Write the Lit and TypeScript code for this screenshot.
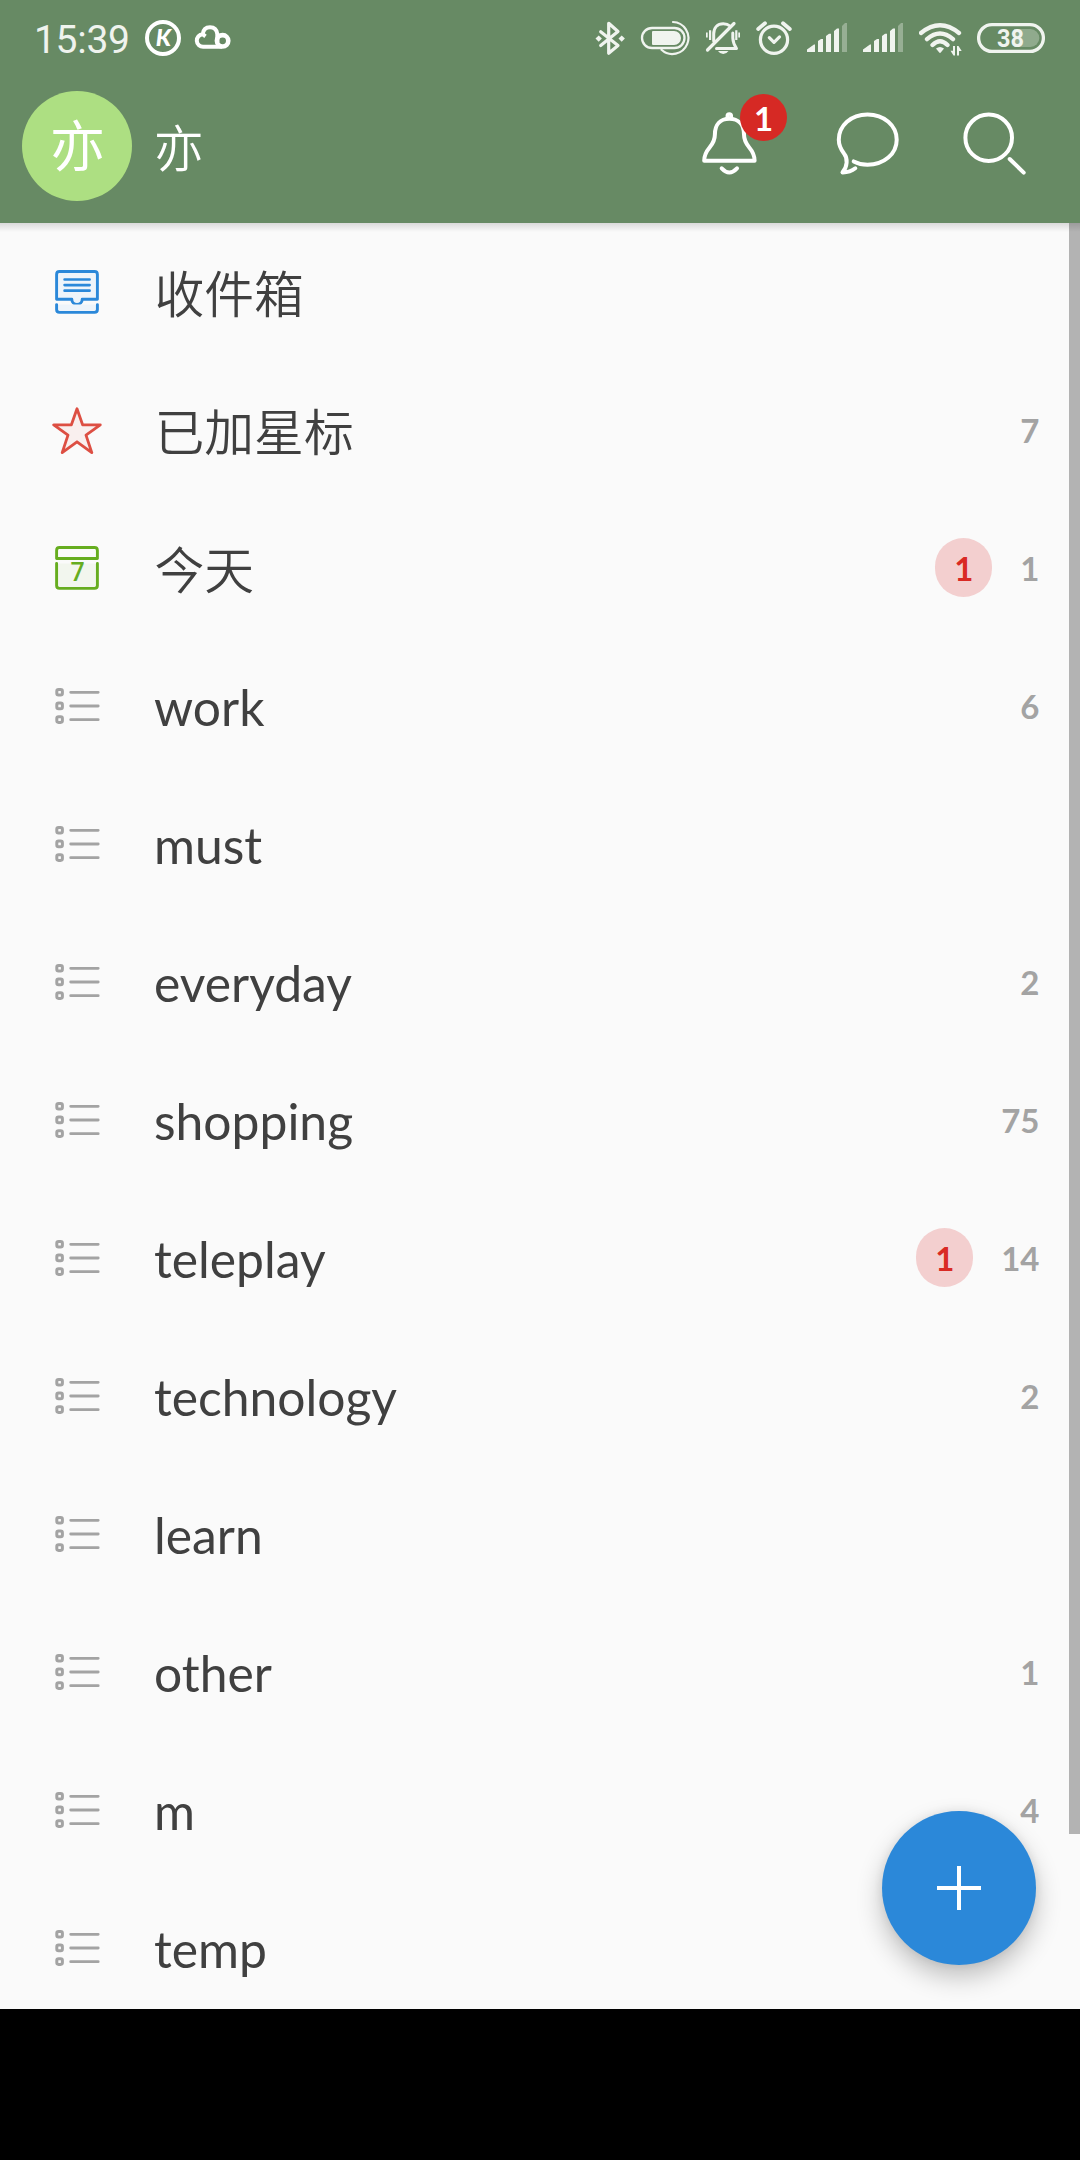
import { LitElement, html, svg, css, nothing } from "lit";
import { customElement, property } from "lit/decorators.js";

type IconKind = "inbox" | "star" | "today" | "list";

interface Entry {
  icon: IconKind;
  title: string;
  count?: number;
  overdue?: number;
}

const ENTRIES: Entry[] = [
  { icon: "inbox", title: "收件箱" },
  { icon: "star", title: "已加星标", count: 7 },
  { icon: "today", title: "今天", count: 1, overdue: 1 },
  { icon: "list", title: "work", count: 6 },
  { icon: "list", title: "must" },
  { icon: "list", title: "everyday", count: 2 },
  { icon: "list", title: "shopping", count: 75 },
  { icon: "list", title: "teleplay", count: 14, overdue: 1 },
  { icon: "list", title: "technology", count: 2 },
  { icon: "list", title: "learn" },
  { icon: "list", title: "other", count: 1 },
  { icon: "list", title: "m", count: 4 },
  { icon: "list", title: "temp" },
];

/* Row icons are drawn around the origin of a 50x50 box. */
const ROW_ICONS = {
  inbox: svg`
    <g fill="#eef4fa" stroke="#2b88d9" stroke-width="2.9" stroke-linecap="round" stroke-linejoin="round">
      <path d="M-20.4 -17.6 Q-20.4 -20.5 -17.5 -20.5 H17.5 Q20.4 -20.5 20.4 -17.6 V7.2 H5.2 A5.2 5.2 0 0 1 -5.2 7.2 H-20.4 Z"/>
      <path d="M-20.4 12.6 V17.5 Q-20.4 20.4 -17.5 20.4 H17.5 Q20.4 20.4 20.4 17.5 V12.6"/>
      <path stroke-width="2.7" d="M-12.4 -12.5 H12.6 M-12.4 -6.9 H12.6 M-12.4 -1.3 H12.6"/>
    </g>`,
  star: svg`
    <path d="M0 -21.3 L5.6 -5.2 H23.3 L9 5.1 L14.8 22.6 L0 11.8 L-14.8 22.6 L-9 5.1 L-23.3 -5.2 H-5.6 Z"
      fill="#f9efee" stroke="#dd4f43" stroke-width="2.8" stroke-linejoin="round"/>`,
  today: svg`
    <g stroke="#66ad1f" stroke-width="2.9" stroke-linecap="round" stroke-linejoin="round">
      <path fill="#fafafa" d="M-20.4 -9.5 V-17.6 Q-20.4 -20.5 -17.5 -20.5 H17.5 Q20.4 -20.5 20.4 -17.6 V-9.5 Z"/>
      <path fill="#f2f6ee" d="M-20.4 -4.6 V17.5 Q-20.4 20.4 -17.5 20.4 H17.5 Q20.4 20.4 20.4 17.5 V-4.6"/>
    </g>
    <text x="0.5" y="13" class="day">7</text>`,
  list: svg`
    <g fill="none" stroke="#a3a3a3" stroke-width="3" stroke-linecap="round">
      <rect x="-20.2" y="-16.6" width="5.6" height="5.6" rx="1.8"/>
      <rect x="-20.2" y="-2.9" width="5.6" height="5.6" rx="1.8"/>
      <rect x="-20.2" y="10.8" width="5.6" height="5.6" rx="1.8"/>
      <path stroke-width="2.8" d="M-6.3 -13.7 H21.2 M-6.3 0 H21.2 M-6.3 13.7 H21.2"/>
    </g>`,
};

@customElement("list-row")
class ListRow extends LitElement {
  @property({ attribute: false }) entry!: Entry;

  static styles = css`
    :host {
      display: flex;
      flex: none;
      align-items: center;
      height: 138px;
      box-sizing: border-box;
      padding: 0 40.5px 0 52px;
      font-family: Lato, "Noto Sans CJK SC", sans-serif;
    }
    .icon { width: 50px; height: 50px; flex: none; }
    .day {
      font: 500 25px Roboto, sans-serif;
      fill: #66ad1f;
      text-anchor: middle;
    }
    .title {
      flex: 1;
      padding: 1px 0 0 52px;
      font-size: 49.8px;
      line-height: 62px;
      color: #404040;
      white-space: nowrap;
    }
    .title.cjk {
      padding: 0 0 2px 52.5px;
      font-family: "Noto Sans CJK SC", sans-serif;
      font-weight: 350;
    }
    .overdue, .count { font-size: 33px; font-weight: 700; line-height: 40px; }
    .overdue {
      display: flex;
      align-items: center;
      justify-content: center;
      box-sizing: border-box;
      width: 57px;
      height: 59px;
      margin: 0 28px 1px 0;
      border-radius: 28.5px;
      background: #f3cfcf;
      color: #d92a24;
    }
    .count { color: #a3a3a3; }
  `;

  render() {
    const { icon, title, count, overdue } = this.entry;
    return html`
      <svg class="icon" viewBox="-25 -25 50 50">${ROW_ICONS[icon]}</svg>
      <span class="title ${icon === "list" ? "" : "cjk"}">${title}</span>
      ${overdue ? html`<span class="overdue">${overdue}</span>` : nothing}
      ${count ? html`<span class="count">${count}</span>` : nothing}
    `;
  }
}

const signalBars = (x: number) => svg`
  <g transform="translate(${x} 0)">
    <path d="M0 52 V49.5 L7 44.5 H8 V52 Z M11 52 V41 L14 39 H16 V52 Z M19 52 V36 L22 33.8 H24 V52 Z M27 52 V31 L30 28.5 H32 V52 Z"/>
    <path opacity="0.35" d="M35 52 V26 L38 23 H40 V52 Z"/>
  </g>`;

@customElement("status-bar")
class StatusBar extends LitElement {
  static styles = css`
    :host {
      display: flex;
      align-items: flex-start;
      height: 76px;
      box-sizing: border-box;
      padding: 0 35px 0 34px;
      color: #f0f4ef;
    }
    svg { height: 76px; flex: none; display: block; }
    .time {
      width: 108px;
      font: 400 39px/80px Roboto, sans-serif;
      letter-spacing: -0.3px;
      color: #eff3ee;
    }
    .left { display: flex; gap: 12px; flex: 1; }
    .right { display: flex; gap: 14px; fill: #f0f4ef; }
    .line { fill: none; stroke: #f0f4ef; stroke-linecap: round; stroke-linejoin: round; }
    .k { font: italic 900 23.5px Lato, sans-serif; fill: #fff; text-anchor: middle; }
    .level { font: 700 26.5px Roboto, sans-serif; fill: #f0f4ef; }
  `;

  render() {
    return html`
      <span class="time">15:39</span>
      <div class="left">
        <svg width="40" viewBox="142 0 40 76">
          <circle cx="163" cy="38" r="16" fill="none" stroke="#fff" stroke-width="4"/>
          <text class="k" x="163.5" y="46.2">K</text>
        </svg>
        <svg width="38" viewBox="194 0 38 76">
          <path d="M222 46.8 H203.5 A6.3 6.3 0 0 1 202.7 34.2 Q203.5 27.2 210 27.2 Q216.5 27.2 217.3 34 V42 M202.7 34.2 L205.5 36.3" fill="none" stroke="#fff" stroke-width="4" stroke-linejoin="round"/>
          <circle cx="222.6" cy="40.8" r="5.7" fill="none" stroke="#fff" stroke-width="4.6"/>
        </svg>
      </div>
      <div class="right">
        <svg width="32" viewBox="594 0 32 76">
          <path class="line" stroke-width="3.2" d="M600.7 31.7 L618 45.5 L608.7 53.3 V23.3 L618 31.5 L600.7 45.5"/>
          <path d="M595.5 38.6 l3.2 -3.2 l3.2 3.2 l-3.2 3.2 Z M618.5 38.6 l3.2 -3.2 l3.2 3.2 l-3.2 3.2 Z"/>
        </svg>
        <svg width="51" viewBox="640 0 51 76">
          <rect class="line" stroke-width="2.3" x="642" y="28" width="42.5" height="20" rx="10"/>
          <path d="M653 31 H674 A7 7 0 0 1 674 45 H653 Q652 45 652 44 V32 Q652 31 653 31 Z"/>
          <path class="line" stroke-width="2.2" d="M673 22 A16 16 0 1 1 661.5 49.7"/>
        </svg>
        <svg width="36" viewBox="705 0 36 76">
          <path class="line" stroke-width="3.2" d="M707.5 50 L734 23.5"/>
          <path class="line" stroke-width="3" d="M713.7 41 V34 C713.7 27.5 717.5 23.7 723.3 23.7 Q727.5 23.7 730 26 M732.8 33 V38 Q733 43 736.5 48.6 H716.5"/>
          <path d="M718 51 H728.5 Q726.5 54 723.2 54 Q720 54 718 51 Z"/>
          <path d="M706 32.6 h1.7 v5 h-1.7 Z M709 30.3 h2.2 v9.8 h-2.2 Z M735.2 30.3 h2.2 v9.8 h-2.2 Z M738.3 32.6 h1.7 v5 h-1.7 Z"/>
        </svg>
        <svg width="37" viewBox="755 0 37 76">
          <circle class="line" stroke-width="3.2" cx="774" cy="39.7" r="13.6"/>
          <path class="line" stroke-width="3.2" d="M769.3 37.6 L774 42.3 L779.5 36.9"/>
          <path class="line" stroke-width="3.8" d="M758.2 29 L765 23.3 M783 23.3 L789.8 29"/>
        </svg>
        <svg width="43" viewBox="806 0 43 76">${signalBars(807)}</svg>
        <svg width="42" viewBox="863 0 42 76">${signalBars(863)}</svg>
        <svg width="44" viewBox="919 0 44 76">
          <path class="line" stroke-width="4.3" d="M921 33 Q940 17.5 959 33 M927 39.2 Q940 28 953 39.2 M932.5 45 Q940 37.5 947.5 45"/>
          <path d="M936 48.5 Q940 45.5 944 48.5 L940.8 52.5 Q940 53.3 939.2 52.5 Z"/>
          <path d="M953 46 h2 v9.5 h-1.5 L950.5 50.7 h2.5 Z M957 55.5 v-9.5 h1.5 L961.7 51 h-2.7 v4.5 Z"/>
        </svg>
        <svg width="68" viewBox="977 0 68 76">
          <path opacity="0.3" d="M1014 29 H1030.3 A9 9 0 0 1 1030.3 47 H1014 Z"/>
          <rect class="line" stroke-width="3.3" x="978.6" y="24.6" width="64.8" height="26.8" rx="13.4"/>
          <text class="level" x="997" y="47" textLength="27" lengthAdjust="spacingAndGlyphs">38</text>
        </svg>
      </div>
    `;
  }
}

@customElement("app-header")
class AppHeader extends LitElement {
  static styles = css`
    :host {
      display: flex;
      align-items: flex-start;
      height: 147px;
      box-sizing: border-box;
      padding: 15px 48px 0 22px;
      color: #fff;
      font-family: Lato, "Noto Sans CJK SC", sans-serif;
    }
    .avatar {
      display: flex;
      align-items: center;
      justify-content: center;
      box-sizing: border-box;
      width: 110px;
      height: 110px;
      padding: 0 0 8px 1px;
      border-radius: 50%;
      background: #addf82;
      font: 400 55px/80px "Noto Sans CJK SC", sans-serif;
    }
    .name {
      flex: 1;
      padding: 0 0 0 22px;
      font: 350 49.5px/109px "Noto Sans CJK SC", sans-serif;
    }
    .actions { display: flex; gap: 60px; padding-top: 17px; }
    .actions svg {
      display: block;
      height: 70px;
      fill: none;
      stroke: #fff;
      stroke-width: 4;
      stroke-linecap: round;
      stroke-linejoin: round;
    }
    .bell { position: relative; }
    .badge {
      position: absolute;
      left: 39px;
      top: -14px;
      width: 47px;
      height: 47px;
      border-radius: 50%;
      background: #d62924;
      font-size: 33px;
      font-weight: 700;
      line-height: 49px;
      text-align: center;
    }
  `;

  render() {
    return html`
      <div class="avatar">亦</div>
      <div class="name">亦</div>
      <div class="actions">
        <div class="bell">
          <svg width="60" viewBox="701 108 60 70">
            <path d="M704.2 160.8 C704.2 147 714.9 148 714.9 134.5 C714.9 124.5 720.5 118.8 729.3 118.8 C738.2 118.8 744 124.5 744 134.5 C744 148 754.6 147 754.6 160.8 Z"/>
            <circle cx="729.3" cy="116" r="1.8"/>
            <path d="M721.7 168.3 Q729.3 176.5 737 168.3"/>
          </svg>
          <span class="badge">1</span>
        </div>
        <svg width="80" viewBox="821 108 80 70">
          <path d="M853.7 161.4 Q860 164.7 867.5 164.7 C884 164.7 896.7 154 896.7 139.7 C896.7 125.5 884 114.5 867.5 114.5 C851 114.5 838.8 125.5 838.8 139.7 C838.8 145 841 149.5 844 153.5 C848 158.5 847.5 166.5 842.5 172.4 Q850 172.5 855.3 168.3"/>
        </svg>
        <svg width="71" viewBox="961 108 71 70">
          <circle cx="988.7" cy="137.7" r="23.3"/>
          <path d="M1009.7 159 L1023.7 172.6"/>
        </svg>
      </div>
    `;
  }
}

@customElement("app-root")
class AppRoot extends LitElement {
  static styles = css`
    :host { display: block; }
    .screen {
      display: flex;
      flex-direction: column;
      width: 1080px;
      height: 2160px;
      background: #000;
      overflow: hidden;
    }
    .top { flex: none; background: #678a64; }
    .content {
      position: relative;
      display: flex;
      flex-direction: column;
      height: 1786px;
      background: #fafafa;
      overflow: hidden;
    }
    .shade {
      position: absolute;
      inset: 0 0 auto 0;
      height: 9px;
      background: linear-gradient(rgba(0, 0, 0, 0.13), rgba(0, 0, 0, 0));
    }
    .scrollbar {
      position: absolute;
      top: 0;
      right: 0;
      width: 11px;
      height: 1611px;
      background: #b3b3b3;
    }
    .fab {
      position: absolute;
      right: 44px;
      bottom: 44px;
      display: flex;
      align-items: center;
      justify-content: center;
      width: 154px;
      height: 154px;
      border-radius: 50%;
      background: #2b88d9;
      box-shadow: 0 12px 26px rgba(0, 0, 0, 0.24), 0 0 10px rgba(0, 0, 0, 0.08);
    }
    .fab svg { width: 44px; height: 44px; stroke: #fff; stroke-width: 4; }
  `;

  render() {
    return html`
      <div class="screen">
        <div class="top">
          <status-bar></status-bar>
          <app-header></app-header>
        </div>
        <div class="content">
          ${ENTRIES.map((entry) => html`<list-row .entry=${entry}></list-row>`)}
          <div class="scrollbar"></div>
          <div class="shade"></div>
          <div class="fab">
            <svg viewBox="0 0 44 44"><path d="M22 0 V44 M0 22 H44"/></svg>
          </div>
        </div>
      </div>
    `;
  }
}
